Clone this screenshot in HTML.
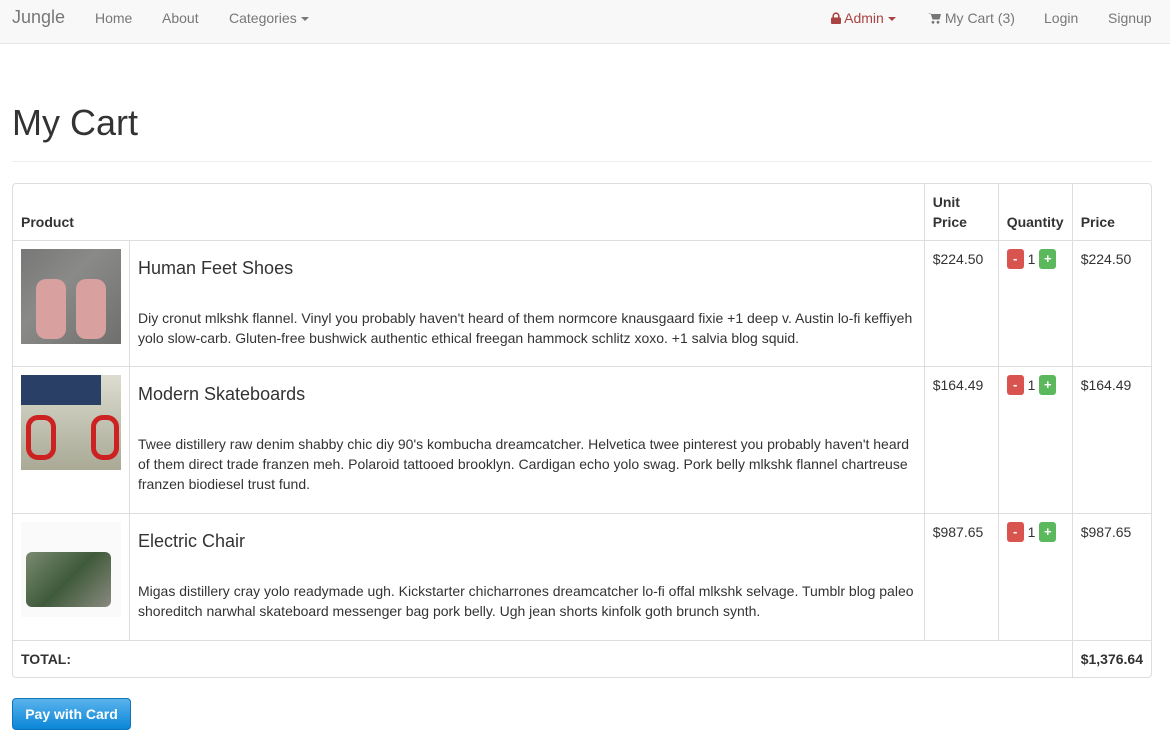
<!DOCTYPE html>
<html><head><style>
*{box-sizing:border-box}
body{margin:0;font-family:"Liberation Sans",sans-serif;font-size:14px;color:#333;line-height:20px;background:#fff}
.nav{height:44px;background:#f8f8f8;border-bottom:1px solid #e7e7e7;position:relative;color:#777;font-size:14px}
.nav span{position:absolute;top:8px}
.brand{font-size:18px;left:12px;top:7px!important}
.caret{display:inline-block;width:0;height:0;border-top:4px solid;border-left:4px solid transparent;border-right:4px solid transparent;vertical-align:middle;margin-left:4px}
h1{font-size:36px;font-weight:400;margin:0;position:absolute;left:12px;top:103px;line-height:40px}
hr{position:absolute;left:12px;width:1140px;top:161px;margin:0;border:0;border-top:1px solid #eee}
table{position:absolute;left:12px;top:183px;width:1140px;border-collapse:separate;border-spacing:0;border:1px solid #ddd;border-radius:4px}
td,th{border-left:1px solid #ddd;border-top:1px solid #ddd;padding:8px;vertical-align:top;text-align:left}
tr td:first-child,tr th:first-child{border-left:0}
thead th{border-top:0;vertical-align:bottom;height:56px}
.img{width:100px;height:95px}
h4{font-size:18px;font-weight:500;margin:9px 0 30px;line-height:20px}
.b{display:inline-block;width:17px;height:20px;border-radius:3px;color:#fff;font-size:13px;font-weight:bold;text-align:center;line-height:20px;vertical-align:top}
.btn{position:absolute;left:12px;top:698px;width:119px;height:32px;border-radius:4px;background:linear-gradient(#5ab3ec,#0a86d8);border:1px solid #1275b8;color:#fff;font-weight:bold;text-align:center;line-height:30px}
</style></head><body>
<div class="nav">
<span class="brand">Jungle</span>
<span style="left:95px">Home</span>
<span style="left:162px">About</span>
<span style="left:229px">Categories<i class="caret"></i></span>
<span style="left:831px;color:#a94442"><svg width="10" height="12" viewBox="0 0 10 12" style="vertical-align:-1px"><path d="M2.2 6V4a2.8 2.8 0 0 1 5.6 0V6" stroke="#a94442" stroke-width="1.6" fill="none"/><rect x="0" y="5.5" width="10" height="6.5" rx="1" fill="#a94442"/></svg> Admin<i class="caret"></i></span>
<span style="left:928px"><svg width="13" height="12" viewBox="0 0 13 12" style="vertical-align:-1px"><path d="M0 1h2.5l2 6.5h7l1.5-5.5H3.5z" fill="#777"/><circle cx="5" cy="10.3" r="1.4" fill="#777"/><circle cx="10" cy="10.3" r="1.4" fill="#777"/></svg> My Cart (3)</span>
<span style="left:1044px">Login</span>
<span style="left:1108px">Signup</span>
</div>
<h1>My Cart</h1><hr>
<table>
<thead><tr><th colspan="2">Product</th><th style="width:74px">Unit Price</th><th style="width:74px">Quantity</th><th style="width:79px">Price</th></tr></thead>
<tbody>
<tr style="height:126px"><td style="width:116px"><div class="img" style="background:linear-gradient(135deg,#777,#8a8a88 40%,#6f6f6d);position:relative"><div style="position:absolute;left:15px;top:30px;width:30px;height:60px;background:#d9a0a0;border-radius:10px"></div><div style="position:absolute;left:55px;top:30px;width:30px;height:60px;background:#d9a0a0;border-radius:10px"></div></div></td><td><h4>Human Feet Shoes</h4>Diy cronut mlkshk flannel. Vinyl you probably haven't heard of them normcore knausgaard fixie +1 deep v. Austin lo-fi keffiyeh yolo slow-carb. Gluten-free bushwick authentic ethical freegan hammock schlitz xoxo. +1 salvia blog squid.</td><td>$224.50</td><td><span class="b" style="background:#d9534f">-</span> 1 <span class="b" style="background:#5cb85c">+</span></td><td>$224.50</td></tr>
<tr style="height:147px"><td><div class="img" style="background:linear-gradient(#dcdcd0,#a9a996);position:relative"><div style="position:absolute;left:0;top:0;width:80px;height:30px;background:#2a3f66"></div><div style="position:absolute;left:5px;top:40px;width:30px;height:45px;border:5px solid #c22;border-radius:12px"></div><div style="position:absolute;left:70px;top:40px;width:28px;height:45px;border:5px solid #c22;border-radius:12px"></div></div></td><td><h4>Modern Skateboards</h4>Twee distillery raw denim shabby chic diy 90's kombucha dreamcatcher. Helvetica twee pinterest you probably haven't heard of them direct trade franzen meh. Polaroid tattooed brooklyn. Cardigan echo yolo swag. Pork belly mlkshk flannel chartreuse franzen biodiesel trust fund.</td><td>$164.49</td><td><span class="b" style="background:#d9534f">-</span> 1 <span class="b" style="background:#5cb85c">+</span></td><td>$164.49</td></tr>
<tr style="height:127px"><td><div class="img" style="background:#fafafa;position:relative"><div style="position:absolute;left:5px;top:30px;width:85px;height:55px;background:linear-gradient(135deg,#7a8a70,#3f5a3a,#8a8a80);border-radius:6px"></div></div></td><td><h4>Electric Chair</h4>Migas distillery cray yolo readymade ugh. Kickstarter chicharrones dreamcatcher lo-fi offal mlkshk selvage. Tumblr blog paleo shoreditch narwhal skateboard messenger bag pork belly. Ugh jean shorts kinfolk goth brunch synth.</td><td>$987.65</td><td><span class="b" style="background:#d9534f">-</span> 1 <span class="b" style="background:#5cb85c">+</span></td><td>$987.65</td></tr>
<tr style="height:37px"><th colspan="4">TOTAL:</th><th>$1,376.64</th></tr>
</tbody></table>
<div class="btn">Pay with Card</div>
</body></html>
